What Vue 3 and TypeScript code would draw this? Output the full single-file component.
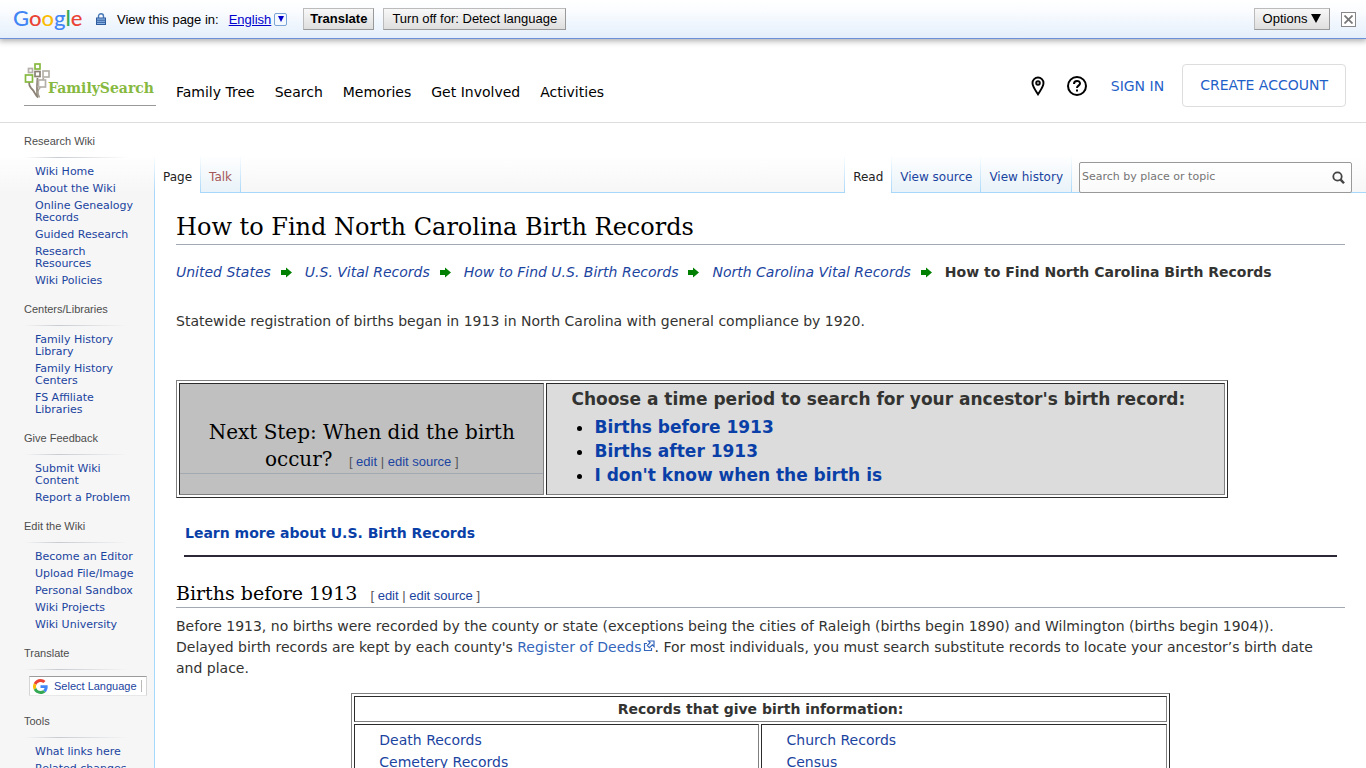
<script setup lang="ts">
interface NavSection {
  title: string
  links: string[]
}

const primaryNav: string[] = ['Family Tree', 'Search', 'Memories', 'Get Involved', 'Activities']

const sectionsTop: NavSection[] = [
  {
    title: 'Research Wiki',
    links: ['Wiki Home', 'About the Wiki', 'Online Genealogy Records', 'Guided Research', 'Research Resources', 'Wiki Policies'],
  },
  { title: 'Centers/Libraries', links: ['Family History Library', 'Family History Centers', 'FS Affiliate Libraries'] },
  { title: 'Give Feedback', links: ['Submit Wiki Content', 'Report a Problem'] },
  {
    title: 'Edit the Wiki',
    links: ['Become an Editor', 'Upload File/Image', 'Personal Sandbox', 'Wiki Projects', 'Wiki University'],
  },
]

const tools: NavSection = { title: 'Tools', links: ['What links here', 'Related changes'] }

const crumbs: string[] = ['United States', 'U.S. Vital Records', 'How to Find U.S. Birth Records', 'North Carolina Vital Records']

const periods: string[] = ['Births before 1913', 'Births after 1913', "I don't know when the birth is"]

const recordColumns: string[][] = [
  ['Death Records', 'Cemetery Records'],
  ['Church Records', 'Census'],
]
</script>

<template>
  <div class="page">
    <div class="gbar">
      <span class="glogo"><span class="b">G</span><span class="r">o</span><span class="y">o</span><span class="b">g</span><span class="g">l</span><span class="r">e</span></span>
      <svg class="lock" width="10" height="12" viewBox="0 0 10 12" aria-hidden="true">
        <path d="M2.5 5.5V3.2a2.5 2.5 0 0 1 5 0v2.3" fill="none" stroke="#4a78b8" stroke-width="1.4" />
        <rect x="0.5" y="5" width="9" height="6.5" fill="#8db4e6" stroke="#2f5c9c" />
        <path d="M1 7.200h8M1 9.300h8" stroke="#2f5c9c" stroke-width="1" />
      </svg>
      <span class="view">View this page in:</span>
      <a class="lang" href="#">English</a>
      <button class="drop" type="button" aria-label="Choose language">
        <svg width="6" height="6" viewBox="0 0 6 6"><path d="M0 0h6L3 6z" fill="#0000cc" /></svg>
      </button>
      <button class="gbtn strong" type="button">Translate</button>
      <button class="gbtn" type="button">Turn off for: Detect language</button>
      <button class="gbtn options" type="button">
        Options
        <svg width="10" height="9" viewBox="0 0 10 9" aria-hidden="true"><path d="M0 0h10L5 9z" fill="#000" /></svg>
      </button>
      <button class="close" type="button" aria-label="Close">
        <svg width="9" height="9" viewBox="0 0 9 9"><path d="M0.5 0.5l8 8M8.5 0.5l-8 8" stroke="#777" stroke-width="1.8" /></svg>
      </button>
    </div>

    <header class="site">
      <a class="brand" href="#">
        <svg width="27" height="36" viewBox="0 0 27 36" aria-hidden="true">
          <path d="M14 34.500c-3-2-3-6-7-9.500-1.500-1.500-2-3-2-6M13.500 34c-1-7-.5-12 0-19" fill="none" stroke="#8a8174" stroke-width="1.800" />
          <path d="M15.500 34.500c-2.500-4-1.500-8 1-10.500M13.500 24c1.500-3 5-3 6-9" fill="none" stroke="#a8a196" stroke-width="1.600" />
          <g fill="#fff" stroke-width="1.700">
            <rect x="11" y="1" width="5" height="5" stroke="#87b940" />
            <rect x="4.500" y="5.500" width="4" height="4" stroke="#b5b1aa" />
            <rect x="11" y="8.500" width="5" height="5" stroke="#8a8174" />
            <rect x="19" y="8" width="6" height="6" stroke="#b5b1aa" />
            <rect x="1.500" y="12" width="7" height="7" stroke="#87b940" />
            <rect x="14.500" y="17" width="7" height="7" stroke="#b5b1aa" />
          </g>
        </svg>
        <span class="brand-name">FamilySearch</span>
      </a>
      <nav class="primary">
        <a v-for="item in primaryNav" :key="item" href="#">{{ item }}</a>
      </nav>
      <div class="account">
        <a class="icon" href="#" aria-label="Locations">
          <svg width="14" height="20" viewBox="0 0 14 20"><path d="M7 18.300C4 13.500 1.500 10.500 1.500 7a5.500 5.500 0 0 1 11 0c0 3.500-2.500 6.500-5.500 11.300z" fill="none" stroke="#000" stroke-width="1.900" /><circle cx="7" cy="7" r="2" fill="#888" stroke="#000" stroke-width="1.500" /></svg>
        </a>
        <a class="icon help" href="#" aria-label="Help">
          <svg width="20" height="20" viewBox="0 0 20 20"><circle cx="10" cy="10" r="9" fill="none" stroke="#000" stroke-width="2" /><path d="M7 8c0-4 6-4 6-.5 0 2-3 2.300-3 4.500" fill="none" stroke="#000" stroke-width="2" /><rect x="9" y="13.500" width="2" height="2" /></svg>
        </a>
        <a class="signin" href="#">SIGN IN</a>
        <a class="create" href="#">CREATE ACCOUNT</a>
      </div>
    </header>

    <div class="wiki">
      <aside class="side">
        <section v-for="s in sectionsTop" :key="s.title">
          <h3>{{ s.title }}</h3>
          <ul>
            <li v-for="l in s.links" :key="l"><a href="#">{{ l }}</a></li>
          </ul>
        </section>
        <section>
          <h3>Translate</h3>
          <button class="translate" type="button">
            <svg width="15" height="15" viewBox="0 0 48 48" aria-hidden="true">
              <path fill="#EA4335" d="M24 9.500c3.540 0 6.710 1.220 9.210 3.600l6.850-6.850C35.900 2.380 30.470 0 24 0 14.620 0 6.510 5.380 2.560 13.220l7.980 6.190C12.430 13.720 17.740 9.500 24 9.500z" />
              <path fill="#4285F4" d="M46.980 24.550c0-1.570-.15-3.090-.38-4.550H24v9.020h12.940c-.58 2.960-2.260 5.480-4.780 7.180l7.730 6c4.510-4.180 7.090-10.360 7.090-17.650z" />
              <path fill="#FBBC05" d="M10.530 28.590A14.500 14.500 0 0 1 9.770 24c0-1.600.27-3.140.76-4.590l-7.980-6.190A23.900 23.900 0 0 0 0 24c0 3.880.92 7.540 2.560 10.780l7.970-6.190z" />
              <path fill="#34A853" d="M24 48c6.480 0 11.930-2.130 15.890-5.810l-7.730-6c-2.150 1.450-4.920 2.300-8.160 2.300-6.260 0-11.570-4.220-13.470-9.910l-7.980 6.190C6.510 42.620 14.620 48 24 48z" />
            </svg>
            <span>Select Language</span>
          </button>
        </section>
        <section>
          <h3>{{ tools.title }}</h3>
          <ul>
            <li v-for="l in tools.links" :key="l"><a href="#">{{ l }}</a></li>
          </ul>
        </section>
      </aside>

      <div class="main">
        <div class="tabs">
          <nav class="tabset">
            <a class="tab on" href="#">Page</a>
            <a class="tab new" href="#">Talk</a>
          </nav>
          <nav class="tabset right">
            <a class="tab on" href="#">Read</a>
            <a class="tab" href="#">View source</a>
            <a class="tab" href="#">View history</a>
          </nav>
          <form class="search" @submit.prevent>
            <input type="search" placeholder="Search by place or topic" aria-label="Search by place or topic" />
            <button type="submit" aria-label="Search">
              <svg width="13" height="13" viewBox="0 0 13 13"><circle cx="5.500" cy="5.500" r="4.200" fill="none" stroke="#444" stroke-width="1.800" /><path d="M8.600 8.600l3.400 3.600" stroke="#444" stroke-width="2.400" /></svg>
            </button>
          </form>
        </div>

        <main class="content">
          <h1>How to Find North Carolina Birth Records</h1>

          <div class="crumbs">
            <template v-for="c in crumbs" :key="c">
              <a href="#">{{ c }}</a>
              <svg width="11" height="11" viewBox="0 0 11 11" aria-hidden="true"><path d="M0 3h5V0.500L11 5.500 5 10.500V8H0z" fill="#008000" /></svg>
            </template>
            <b>How to Find North Carolina Birth Records</b>
          </div>

          <p class="lead">Statewide registration of births began in 1913 in North Carolina with general compliance by 1920.</p>

          <table class="grid step">
            <tbody>
              <tr>
                <td class="question">
                  <h2>Next Step: When did the birth occur? <span class="edit">[ <a href="#">edit</a> | <a href="#">edit source</a> ]</span></h2>
                </td>
                <td class="choices">
                  <b>Choose a time period to search for your ancestor's birth record:</b>
                  <ul>
                    <li v-for="p in periods" :key="p"><a href="#">{{ p }}</a></li>
                  </ul>
                </td>
              </tr>
            </tbody>
          </table>

          <div class="more"><a href="#">Learn more about U.S. Birth Records</a></div>

          <h2 class="births">Births before 1913 <span class="edit">[ <a href="#">edit</a> | <a href="#">edit source</a> ]</span></h2>

          <p class="body">
            Before 1913, no births were recorded by the county or state (exceptions being the cities of Raleigh (births begin 1890) and Wilmington (births begin 1904)). Delayed birth records are kept by each county's <a class="ext" href="#">Register of Deeds<svg width="12" height="12" viewBox="0 0 12 12" aria-hidden="true"><path d="M4 3.500H1.500v7h7V8" fill="none" stroke="#36b" stroke-width="1.200" /><path d="M5.500 1h5.500v5.500L9.300 4.900 6.500 7.700 4.300 5.500 7.100 2.700z" fill="#fff" stroke="#36b" stroke-width="1.200" /></svg></a>. For most individuals, you must search substitute records to locate your ancestor’s birth date and place.
          </p>

          <table class="grid records">
            <thead>
              <tr><th colspan="2">Records that give birth information:</th></tr>
            </thead>
            <tbody>
              <tr>
                <td v-for="(col, i) in recordColumns" :key="i">
                  <ul>
                    <li v-for="r in col" :key="r"><a href="#">{{ r }}</a></li>
                  </ul>
                </td>
              </tr>
            </tbody>
          </table>
        </main>
      </div>
    </div>
  </div>
</template>

<style>
body {
  margin: 0;
  background: #fff;
}
</style>

<style scoped>
.page {
  min-height: 100vh;
  display: flex;
  flex-direction: column;
  font-family: Verdana, "DejaVu Sans", sans-serif;
  font-size: 14px;
  color: #333331;
}
a {
  color: #1b44a0;
  text-decoration: none;
}
button {
  font-family: inherit;
  padding: 0;
  cursor: pointer;
}
svg {
  flex: none;
}
ul {
  list-style: none;
  margin: 0;
  padding: 0;
}

/* translate bar */
.gbar {
  flex: none;
  box-sizing: border-box;
  height: 39px;
  display: flex;
  align-items: center;
  padding: 0 10px 0 13px;
  border-bottom: 1px solid #6b90da;
  background: linear-gradient(#fff, #fafcff 30%, #e4effb);
  box-shadow: 0 1px 6px 1px #aaa;
  font-family: "Liberation Sans", Arial, sans-serif;
  font-size: 13px;
  color: #000;
}
.glogo {
  width: 83px;
  padding-bottom: 2px;
  font-family: Lato, sans-serif;
  font-size: 22px;
  font-weight: 500;
  line-height: 34px;
}
.b { color: #4285f4; }
.r { color: #ea4335; }
.y { color: #fbbc05; }
.g { color: #34a853; }
.view {
  margin: 0 10px 0 11px;
}
.lang {
  color: #0000cc;
  text-decoration: underline;
}
.drop {
  width: 13px;
  height: 13px;
  margin: 0 16px 0 3px;
  border: 1px solid #7aa5d6;
  border-radius: 2px;
  background: #f4f8ff;
  display: flex;
  align-items: center;
  justify-content: center;
}
.gbtn {
  height: 22px;
  margin-right: 9px;
  padding: 0 8px;
  border: 1px solid;
  border-color: #bbb #999 #999 #bbb;
  background: linear-gradient(#f8f8f8, #dedede);
  font-size: 13px;
  line-height: 18px;
  color: #000;
}
.strong {
  padding: 0 6px;
  font-weight: bold;
}
.options {
  margin: 0 11px 0 auto;
}
.close {
  box-sizing: border-box;
  width: 15px;
  height: 15px;
  border: 1px solid #888;
  background: #fff;
  display: flex;
  align-items: center;
  justify-content: center;
}

/* site header */
.site {
  flex: none;
  box-sizing: border-box;
  height: 84px;
  display: flex;
  align-items: center;
  padding: 0 20px 0 24px;
  border-bottom: 1px solid #ddd;
}
.brand {
  width: 132px;
  height: 42px;
  display: flex;
  align-items: flex-start;
  margin: 8px 20px 0 0;
  border-bottom: 1px solid #999;
}
.brand-name {
  margin: 13px 0 0 -3px;
  font-family: "DejaVu Serif", serif;
  font-size: 14px;
  font-weight: bold;
  line-height: 24px;
  color: #87b940;
}
.primary {
  display: flex;
  gap: 20px;
  padding-top: 22px;
}
.primary a {
  color: #000;
}
.account {
  margin-left: auto;
  display: flex;
  align-items: center;
  padding-top: 10px;
}
.icon {
  display: flex;
}
.help {
  margin: 0 24px 0 22px;
}
.signin,
.create {
  color: #1f5fc8;
}
.create {
  margin-left: 18px;
  padding: 0 17px;
  border: 1px solid #ddd;
  border-radius: 4px;
  line-height: 41px;
}

/* wiki frame */
.wiki {
  flex: 1;
  display: grid;
  grid-template-columns: 154px minmax(0, 1fr);
  background: linear-gradient(#fff 32px, #f6f6f6 70px);
}
.side {
  padding-top: 12px;
  font-size: 11px;
  line-height: 12px;
}
.side section {
  margin-bottom: 11px;
}
.side h3 {
  margin: 0 0 0 24px;
  padding-bottom: 11px;
  font-family: "Liberation Sans", Arial, sans-serif;
  font-size: 11px;
  font-weight: normal;
  color: #4d4d4d;
  background: linear-gradient(to right, #c8ccd100, #c8ccd1 33%, #c8ccd100) left bottom / 104px 1px no-repeat;
}
.side ul {
  padding: 8px 16px 0 35px;
}
.side li {
  padding-bottom: 5px;
}
.translate {
  box-sizing: border-box;
  width: 118px;
  height: 20px;
  margin: 6px 0 19px 29px;
  padding: 0 3px;
  display: flex;
  align-items: center;
  gap: 6px;
  border: 1px solid;
  border-color: #9b9b9b #d5d5d5 #e8e8e8;
  background: #fff;
  font-family: "Liberation Sans", Arial, sans-serif;
  font-size: 11px;
  color: #1b44a0;
  white-space: nowrap;
}
.translate span {
  padding-right: 4px;
  border-right: 1px solid #bbb;
}

/* tabs */
.main {
  display: flex;
  flex-direction: column;
  padding-top: 32px;
}
.tabs {
  height: 38px;
  display: flex;
  align-items: stretch;
  padding-right: 14px;
  background: linear-gradient(#a7d7f9, #a7d7f9) bottom / 100% 1px no-repeat;
}
.tabset {
  display: flex;
  padding-left: 1px;
  background: linear-gradient(#fff, #a7d7f9) left / 1px 100% no-repeat;
}
.right {
  margin-left: auto;
}
.tab {
  padding: 7px 9px 0 8px;
  font-size: 12px;
  line-height: 30px;
  background:
    linear-gradient(#fff, #a7d7f9) right / 1px 100% no-repeat,
    linear-gradient(#a7d7f9, #a7d7f9) bottom / 100% 1px no-repeat,
    linear-gradient(#fff, #e8f2f8);
}
.on {
  color: #222;
  background: linear-gradient(#fff, #a7d7f9) right / 1px 100% no-repeat, #fff;
}
.new {
  color: #a55858;
}
.search {
  box-sizing: border-box;
  width: 273px;
  height: 31px;
  margin: 7px 0 0 7px;
  display: flex;
  align-items: center;
  border: 1px solid #999;
  border-radius: 2px;
  background: linear-gradient(#fff, #fafafa);
}
.search input {
  flex: 1;
  min-width: 0;
  border: 0;
  padding: 0 2px 2px;
  background: none;
  outline: 0;
  font-family: inherit;
  font-size: 11px;
}
.search input::placeholder {
  color: #757575;
}
.search button {
  width: 25px;
  height: 28px;
  border: 0;
  background: none;
  display: flex;
  align-items: center;
  justify-content: center;
}

/* article */
.content {
  flex: 1;
  padding: 18px 21px 0;
  border-left: 1px solid #a7d7f9;
  background: #fff;
}
h1,
h2 {
  margin: 0;
  font-family: "DejaVu Serif", serif;
  font-weight: normal;
  color: #000;
  border-bottom: 1px solid #a2a9b1;
}
h1 {
  font-size: 24px;
  line-height: 33px;
}
h2 {
  font-size: 20px;
  line-height: 27px;
}
.edit {
  margin-left: 7px;
  font-family: "Liberation Sans", Arial, sans-serif;
  font-size: 13px;
  line-height: 16px;
  color: #555;
  white-space: nowrap;
}
.crumbs {
  display: flex;
  align-items: center;
  margin-top: 16px;
  line-height: 22px;
  white-space: nowrap;
}
.crumbs a {
  font-style: italic;
}
.crumbs svg {
  margin: 0 13px 0 10px;
}
.lead {
  margin: 28px 0 48px;
  line-height: 21px;
}
.grid {
  border: 1px solid;
  border-color: #808080 #2c2c2c #2c2c2c #808080;
  border-collapse: separate;
  border-spacing: 2px;
}
.grid td,
.grid th {
  padding: 0;
  border: 1px solid;
  border-color: #2c2c2c #808080 #808080 #2c2c2c;
}
.step {
  width: 90%;
}
.question {
  width: 35%;
  background: #c0c0c0;
}
.question h2 {
  margin: 14px 0 0;
  padding: 0 24px;
  text-align: center;
}
.question .edit {
  margin-left: 10px;
}
.step .choices {
  padding: 3px 24px 7px;
  vertical-align: top;
  background: #dcdcdc;
  font-size: 17px;
  font-weight: bold;
  line-height: 24px;
}
.choices ul {
  margin-top: 4px;
  padding-left: 23px;
  list-style: disc;
}
.choices li::marker {
  color: #000;
}
.choices a,
.more a {
  color: #0a3fa8;
}
.more {
  margin: 24px 8px 0;
  padding: 0 1px 11px;
  border-bottom: 2px solid #2c2835;
  font-weight: bold;
  line-height: 22px;
}
.births {
  margin-top: 23px;
  font-size: 19px;
}
.body {
  margin: 8px 0 14px;
  padding-right: 20px;
  line-height: 21px;
}
.ext {
  color: #3366bb;
}
.ext svg {
  margin-left: 1px;
}
.records {
  width: 70%;
  margin: 0 auto;
  table-layout: fixed;
}
.records th {
  line-height: 24px;
}
.records td {
  padding: 4px 24px;
  line-height: 22px;
}
</style>
